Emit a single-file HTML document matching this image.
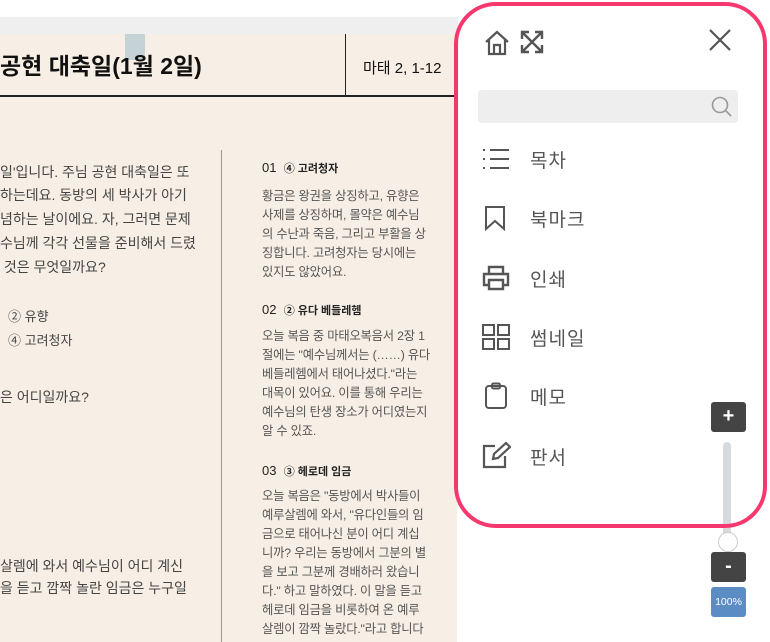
<!DOCTYPE html>
<html><head><meta charset="utf-8"><style>
*{margin:0;padding:0;box-sizing:border-box}
body{width:770px;height:642px;overflow:hidden;background:#fff;position:relative;font-family:"Liberation Sans","Noto Sans CJK KR",sans-serif}
.a{position:absolute;white-space:nowrap}
.page{position:absolute;left:0;top:34px;width:457px;height:608px;background:#f7efe5}
.band{position:absolute;left:0;top:17px;width:458px;height:17px;background:#efefef}
.l{font-size:14px;color:#444;left:0}
.r{font-size:12.3px;color:#555;left:262px;letter-spacing:-0.2px}
.h{font-size:13px;color:#222;left:262px}
.h b{font-size:11px}
.m{font-size:19px;color:#555;left:530px;letter-spacing:1px}
.ic{position:absolute;left:481px}
</style></head><body>
<div class="band"></div>
<div class="page"></div>
<div class="a" style="left:125px;top:34px;width:20px;height:26px;background:#c5d3d6"></div>
<div class="a" style="left:0;top:47px;font-size:23px;font-weight:bold;color:#111">공현 대축일(1월 2일)</div>
<div class="a" style="left:345px;top:34px;width:1px;height:62px;background:#222"></div>
<div class="a" style="left:0;top:95px;width:457px;height:1.5px;background:#222"></div>
<div class="a" style="left:363px;top:57px;font-size:15px;color:#111">마태 2, 1-12</div>
<div class="a" style="left:221px;top:150px;width:1px;height:492px;background:#999"></div>

<div class="a l" style="top:162px">일'입니다. 주님 공현 대축일은 또</div>
<div class="a l" style="top:185px">하는데요. 동방의 세 박사가 아기</div>
<div class="a l" style="top:209px">념하는 날이에요. 자, 그러면 문제</div>
<div class="a l" style="top:233px">수님께 각각 선물을 준비해서 드렸</div>
<div class="a l" style="top:257px">&nbsp;것은 무엇일까요?</div>
<div class="a l" style="top:306px;left:8px;font-size:13px">② 유향</div>
<div class="a l" style="top:330px;left:8px;font-size:13px">④ 고려청자</div>
<div class="a l" style="top:387px">은 어디일까요?</div>
<div class="a l" style="top:556px">살렘에 와서 예수님이 어디 계신</div>
<div class="a l" style="top:578px">을 듣고 깜짝 놀란 임금은 누구일</div>

<div class="a h" style="top:160px">01 &nbsp;<b>④ 고려청자</b></div>
<div class="a r" style="top:186px">황금은 왕권을 상징하고, 유향은</div>
<div class="a r" style="top:205px">사제를 상징하며, 몰약은 예수님</div>
<div class="a r" style="top:224px">의 수난과 죽음, 그리고 부활을 상</div>
<div class="a r" style="top:243px">징합니다. 고려청자는 당시에는</div>
<div class="a r" style="top:262px">있지도 않았어요.</div>
<div class="a h" style="top:302px">02 &nbsp;<b>② 유다 베들레헴</b></div>
<div class="a r" style="top:326px">오늘 복음 중 마태오복음서 2장 1</div>
<div class="a r" style="top:345px">절에는 "예수님께서는 (……) 유다</div>
<div class="a r" style="top:364px">베들레헴에서 태어나셨다."라는</div>
<div class="a r" style="top:383px">대목이 있어요. 이를 통해 우리는</div>
<div class="a r" style="top:402px">예수님의 탄생 장소가 어디였는지</div>
<div class="a r" style="top:421px">알 수 있죠.</div>
<div class="a h" style="top:463px">03 &nbsp;<b>③ 헤로데 임금</b></div>
<div class="a r" style="top:486px">오늘 복음은 "동방에서 박사들이</div>
<div class="a r" style="top:505px">예루살렘에 와서, "유다인들의 임</div>
<div class="a r" style="top:524px">금으로 태어나신 분이 어디 계십</div>
<div class="a r" style="top:543px">니까? 우리는 동방에서 그분의 별</div>
<div class="a r" style="top:562px">을 보고 그분께 경배하러 왔습니</div>
<div class="a r" style="top:581px">다." 하고 말하였다. 이 말을 듣고</div>
<div class="a r" style="top:600px">헤로데 임금을 비롯하여 온 예루</div>
<div class="a r" style="top:619px">살렘이 깜짝 놀랐다."라고 합니다</div>

<!-- panel bg -->
<div class="a" style="left:454px;top:2px;width:313px;height:526px;border-radius:42px;background:#fff"></div>

<!-- zoom controls -->
<div class="a" style="left:711px;top:402px;width:35px;height:30px;background:#444;border-radius:3px;color:#fff;font-weight:bold;font-size:20px;text-align:center;line-height:29px">+</div>
<div class="a" style="left:723px;top:442px;width:8px;height:104px;background:#d6dadd;border-radius:4px"></div>
<div class="a" style="left:718px;top:532px;width:20px;height:20px;background:#fff;border:1px solid #ccc;border-radius:50%"></div>
<div class="a" style="left:711px;top:552px;width:35px;height:30px;background:#444;border-radius:3px;color:#fff;font-weight:bold;font-size:20px;text-align:center;line-height:28px">-</div>
<div class="a" style="left:711px;top:587px;width:35px;height:30px;background:#5b8dc4;border-radius:3px;color:#fff;font-size:10.5px;text-align:center;line-height:30px">100%</div>

<!-- panel border -->
<div class="a" style="left:454px;top:2px;width:313px;height:526px;border:4px solid #f5386d;border-radius:42px"></div>
<svg class="a" style="left:484px;top:30px" width="26" height="26" viewBox="0 0 26 26" fill="none" stroke="#555" stroke-width="2.2"><path d="M2 12 L13 2 L24 12 M5 10 V24 H21 V10 M10 24 V15 H16 V24"/></svg>
<svg class="a" style="left:520px;top:30px" width="24" height="24" viewBox="0 0 24 24" fill="none" stroke="#555" stroke-width="2.4"><path d="M2 2 L22 22 M22 2 L2 22 M2 9 V2 H9 M15 2 H22 V9 M22 15 V22 H15 M9 22 H2 V15"/></svg>
<svg class="a" style="left:708px;top:28px" width="24" height="24" viewBox="0 0 24 24" stroke="#555" stroke-width="2.2"><path d="M2 2 L22 22 M22 2 L2 22"/></svg>
<div class="a" style="left:478px;top:90px;width:260px;height:33px;background:#eeeeee;border-radius:4px"></div>
<svg class="a" style="left:711px;top:96px" width="22" height="22" viewBox="0 0 22 22" fill="none" stroke="#999" stroke-width="1.6"><circle cx="9" cy="9" r="7.5"/><path d="M14.5 14.5 L20 20"/></svg>

<svg class="ic" style="top:148px" width="30" height="22" viewBox="0 0 30 22" stroke="#555" stroke-width="2"><path d="M2 2h2M9 2h19M2 11h2M9 11h19M2 20h2M9 20h19"/></svg>
<div class="a m" style="top:146px">목차</div>
<svg class="ic" style="top:205px" width="30" height="26" viewBox="0 0 30 26" fill="none" stroke="#555" stroke-width="2"><path d="M5 2h18v22l-9-8-9 8z"/></svg>
<div class="a m" style="top:205px">북마크</div>
<svg class="ic" style="top:265px" width="30" height="26" viewBox="0 0 30 26" fill="none" stroke="#555" stroke-width="2.4"><path d="M8 8V2h14v6M8 20H3V9h24v11h-5M8 15h14v9H8z"/></svg>
<div class="a m" style="top:265px">인쇄</div>
<svg class="ic" style="top:323px" width="30" height="28" viewBox="0 0 30 28" fill="none" stroke="#555" stroke-width="2"><rect x="2" y="2" width="11" height="10"/><rect x="17" y="2" width="11" height="10"/><rect x="2" y="16" width="11" height="10"/><rect x="17" y="16" width="11" height="10"/></svg>
<div class="a m" style="top:324px">썸네일</div>
<svg class="ic" style="top:382px" width="30" height="28" viewBox="0 0 30 28" fill="none" stroke="#555" stroke-width="2"><rect x="5" y="4" width="20" height="22" rx="3"/><rect x="11" y="1.5" width="8" height="5" rx="1.5"/></svg>
<div class="a m" style="top:383px">메모</div>
<svg class="ic" style="top:441px" width="30" height="28" viewBox="0 0 30 28" fill="none" stroke="#555" stroke-width="2.2"><path d="M14 5H3v21h21V15M12 18l1-5 12-11 4 4-12 11z"/></svg>
<div class="a m" style="top:443px">판서</div>
</body></html>
